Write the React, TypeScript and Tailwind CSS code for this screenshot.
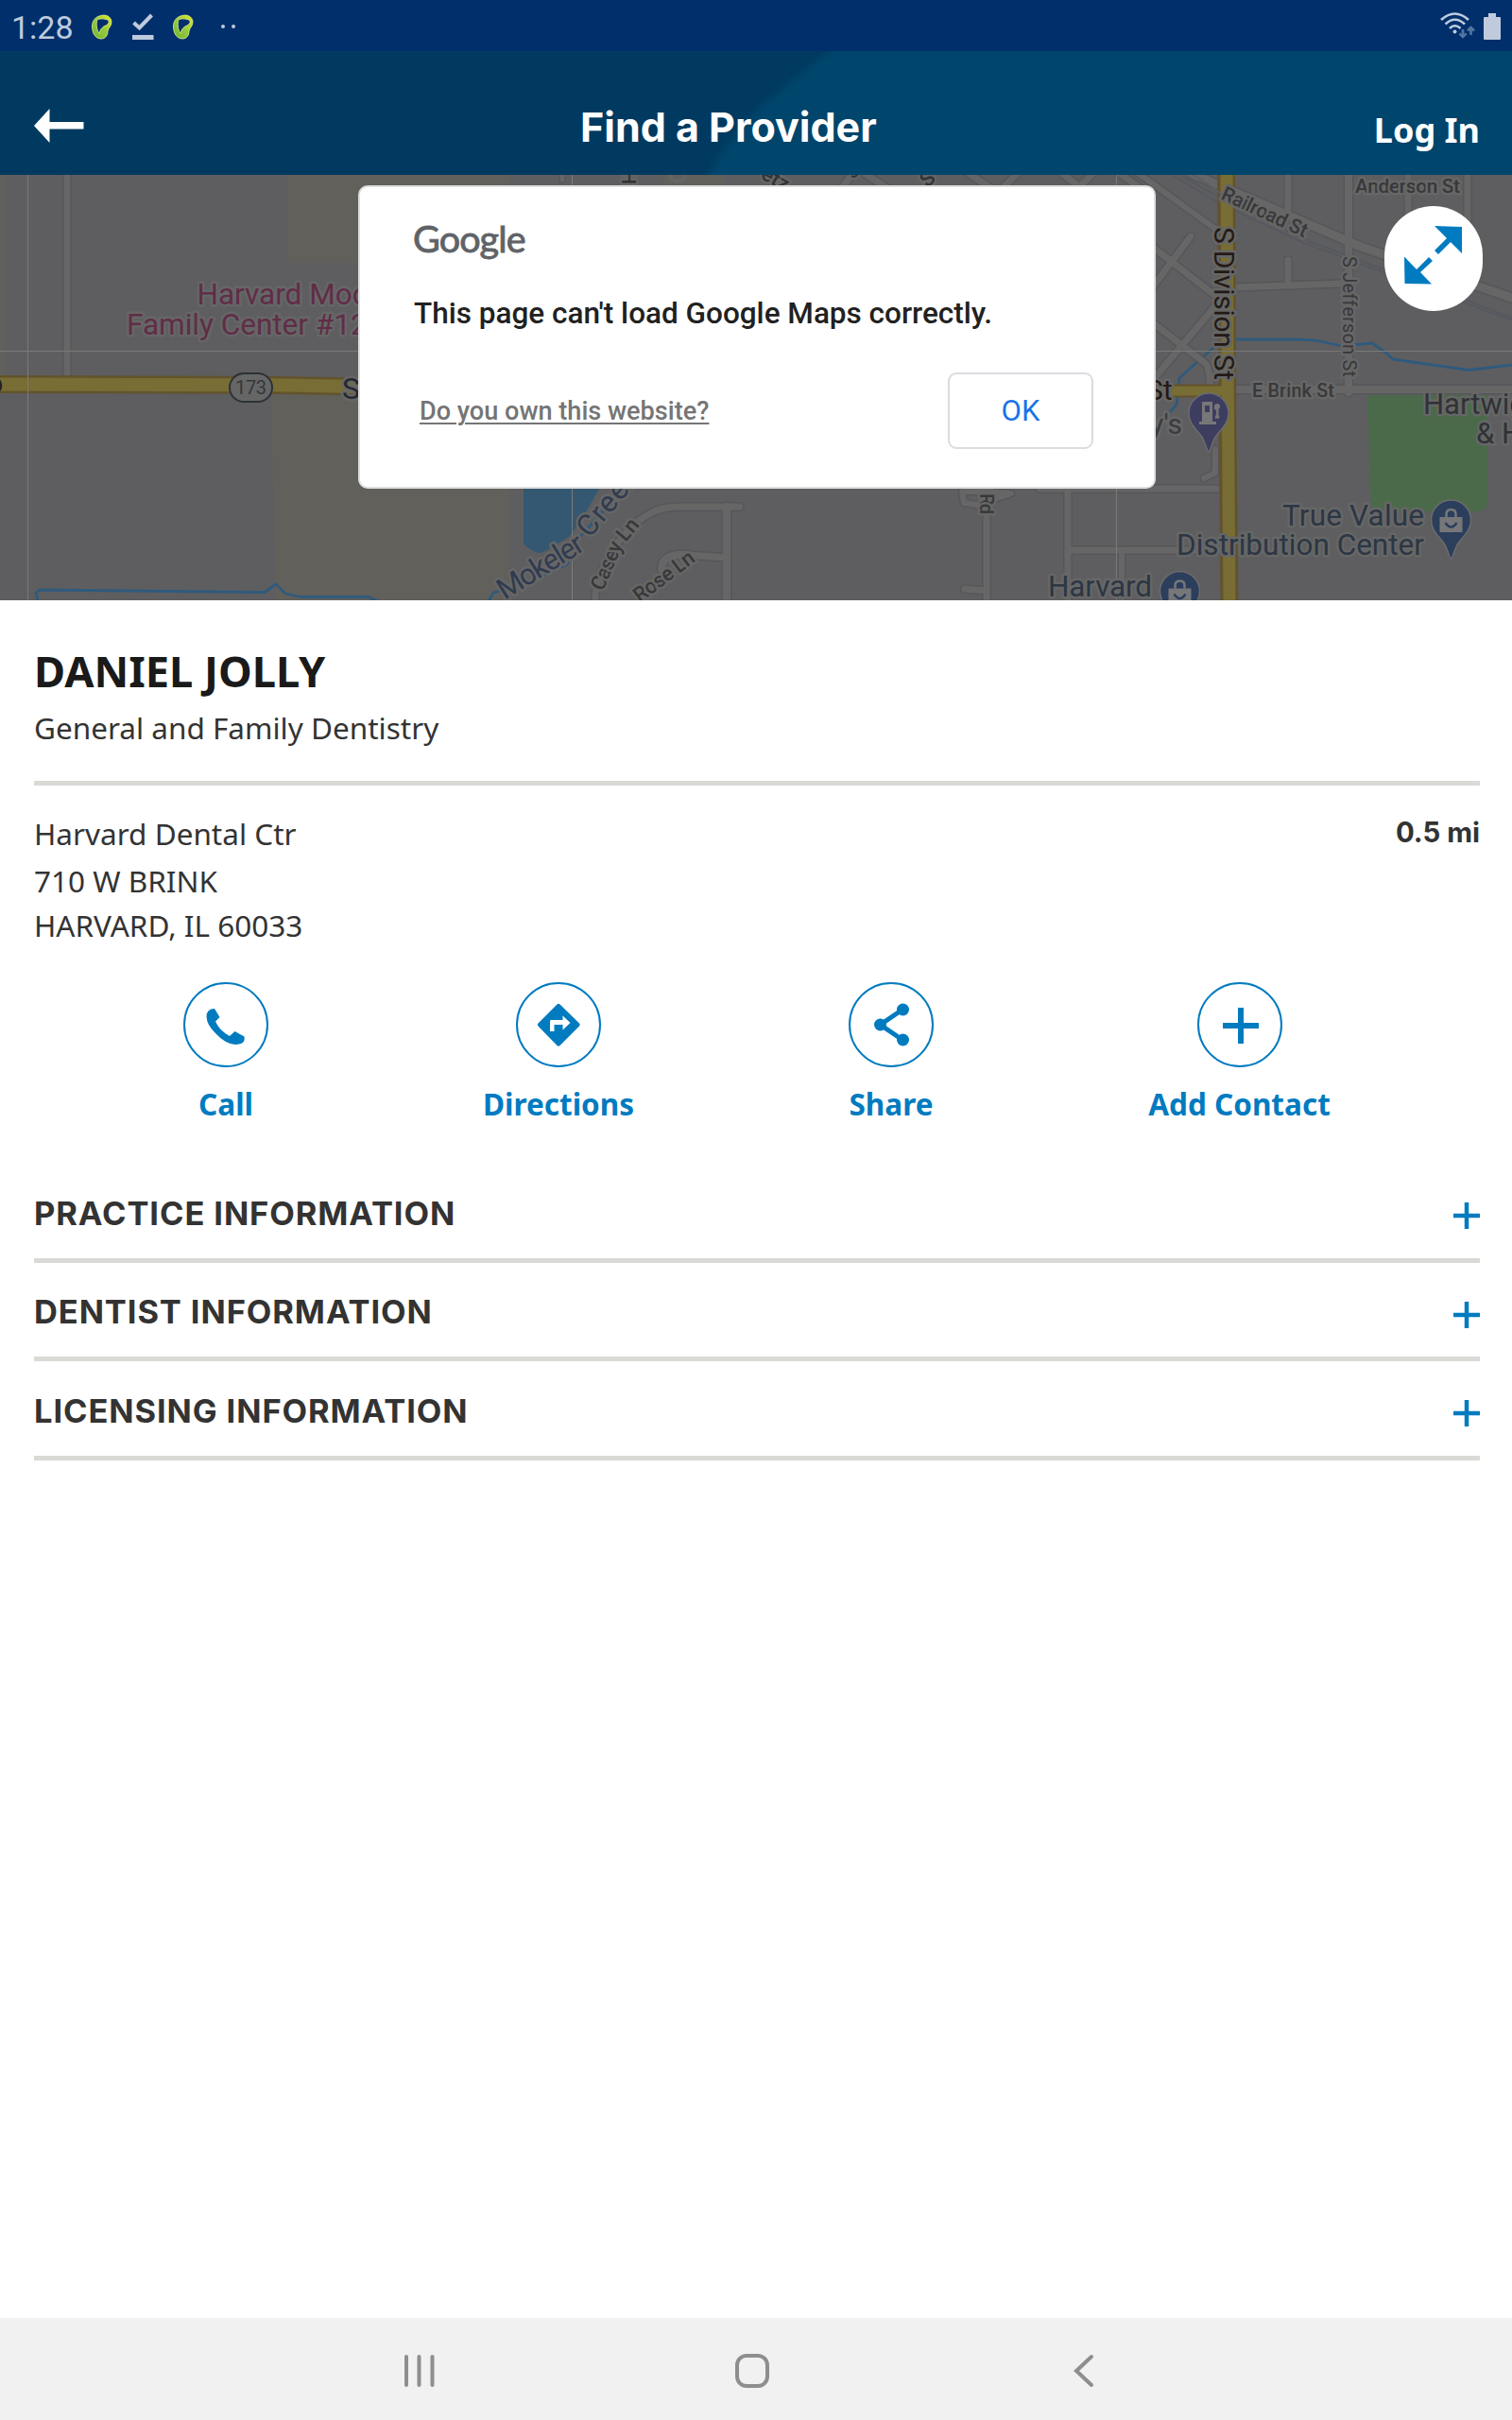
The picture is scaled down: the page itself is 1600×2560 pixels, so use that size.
import React from "react";

const MAP_FONT = "Roboto, sans-serif";

function AppGlyph() {
  return (
    <svg width="24" height="28" viewBox="0 0 24 28" className="shrink-0">
      <defs>
        <linearGradient id="lime" x1="0" y1="1" x2="1" y2="0">
          <stop offset="0" stopColor="#6ab52e" />
          <stop offset="0.5" stopColor="#94c93d" />
          <stop offset="1" stopColor="#e0ea1c" />
        </linearGradient>
      </defs>
      <path
        fill="url(#lime)"
        stroke="#e4f08a"
        strokeWidth="0.8"
        fillRule="evenodd"
        d="M11 1.500C16 0 21.500 2.500 22 8C22 13 18.500 14.500 18 18C18 22 16 26 11 26C5 26 1.500 20 1.500 13C1.500 7 5 2.500 11 1.500ZM7 5.500C5.500 10 6 16 9 20.500C10 16 12 13.500 16 12C18.500 11 19.500 9 19 6.500C15 4.500 11 4.500 7 5.500Z"
      />
    </svg>
  );
}

function StatusBar() {
  return (
    <div className="flex h-[54px] items-center bg-[#002f6c] pl-[12px] pr-3">
      <span className="w-[66px] pt-[3px] font-[Roboto] text-[34px] leading-none text-[#bfcbdd]">1:28</span>
      <div className="ml-[18px] pt-[3px]"><AppGlyph /></div>
      <svg width="23" height="28" viewBox="0 0 23 28" className="ml-[20px] mt-[2px]">
        <path d="M1.500 10L7.500 15.500L20.500 2" fill="none" stroke="#bfcbdd" strokeWidth="4" />
        <rect x="0" y="23" width="22.500" height="5" fill="#bfcbdd" />
      </svg>
      <div className="ml-[19px] pt-[3px]"><AppGlyph /></div>
      <div className="ml-[28px] mt-[2px] flex gap-[7px]">
        <span className="size-1 rounded-full bg-[#bfcbdd]" />
        <span className="size-1 rounded-full bg-[#bfcbdd]" />
      </div>
      <svg width="37" height="29" viewBox="0 0 37 29" className="ml-auto mt-px" fill="none" stroke="#bfcbdd" strokeWidth="2.600">
        <path d="M1 8Q15.500 -5 30 8" />
        <path d="M5.500 12.500Q15.500 3 26 12.500" />
        <path d="M10 17Q15.500 11.500 21.500 17" />
        <circle cx="15.500" cy="20.500" r="2" fill="#bfcbdd" stroke="none" />
        <g stroke="#55759f">
          <path d="M24 18V25" /><path d="M20.500 22.500L24 26L27.500 22.500" />
          <path d="M32.500 24V17" /><path d="M29 19.500L32.500 16L36 19.500" />
        </g>
      </svg>
      <svg width="18" height="28" viewBox="0 0 18 28" className="ml-[9px] mt-[2px]">
        <path d="M5 0H13V4H17A1 1 0 0 1 18 5V27A1 1 0 0 1 17 28H1A1 1 0 0 1 0 27V5A1 1 0 0 1 1 4H5Z" fill="#bfcbdd" />
      </svg>
    </div>
  );
}

function Header() {
  return (
    <header className="relative flex h-[131px] items-center justify-between bg-[#003a60] pl-[35px] pr-[34px]">
      <svg className="absolute inset-0" width="1600" height="131" viewBox="0 0 1600 131">
        <defs>
          <filter id="soft" x="-5%" y="-20%" width="110%" height="140%"><feGaussianBlur stdDeviation="3" /></filter>
        </defs>
        <path d="M898 -20L876 0L806 57Q770 92 750 131L738 155H1640V-20Z" fill="#00446c" filter="url(#soft)" />
      </svg>
      <svg className="relative mt-[26px]" width="54" height="36" viewBox="0 0 54 36" fill="#fff">
        <path d="M1 18L17.500 0V14H53.500V21.500H17.500V36Z" />
      </svg>
      <h1 className="absolute left-[614px] top-[52px] whitespace-nowrap font-[Inter] text-[43px] font-bold leading-[56px] text-white">
        Find a Provider
      </h1>
      <a className="relative mt-[36px] font-['Noto_Sans'] text-[36px] font-bold leading-[48px] text-white">Log In</a>
    </header>
  );
}

const ROADS: [string, number][] = [
  ["M71 180V400", 7],
  ["M595 170V190", 5],
  ["M630 640V628C635 600 655 560 690 542Q702 536 720 536H783", 7],
  ["M769 536V640", 8],
  ["M769 590L728 587", 7],
  ["M728 587Q700 585 700 602", 8],
  ["M1044 545V640", 7],
  ["M1044 625L1021 623", 7],
  ["M1035 534L1020 532L1018 520H1048L1070 522Z", 6],
  ["M1130 517V640", 7],
  ["M1100 517H1290", 7],
  ["M1130 582H1290", 7],
  ["M1187 582V640", 6],
  ["M890 200L905 180", 7],
  ["M910 180L940 200", 7],
  ["M1020 180L1050 200", 7],
  ["M1060 200L1080 180", 7],
  ["M1120 180L1145 200", 7],
  ["M1145 195L1160 180", 7],
  ["M1180 180L1205 198", 7],
  ["M1200 180L1290 245", 6],
  ["M1218 260L1285 312", 7],
  ["M1260 250L1218 306", 7],
  ["M1218 340L1275 384Q1280 388 1281 412", 7],
  ["M1285 325L1218 404", 7],
  ["M1363 180V225", 7],
  ["M1363 275V300", 7],
  ["M1304 304L1420 300", 7],
  ["M1427 180V415", 8],
  ["M1490 180V240", 7],
  ["M1553 180V240", 7],
  ["M1300 412H1600", 8],
  ["M1286 475V500L1274 506", 6],
  ["M1260 183L1440 261L1600 315", 9],
];

function Label(props: {
  x: number; y: number; size: number; fill: string; children: React.ReactNode;
  rotate?: number; weight?: number; length?: number; anchor?: "start" | "end";
}) {
  const { x, y, size, fill, children, rotate = 0, weight = 400, length, anchor = "start" } = props;
  return (
    <text
      transform={`translate(${x} ${y}) rotate(${rotate})`}
      fontFamily={MAP_FONT} fontSize={size} fontWeight={weight} fill={fill}
      stroke="#666666" strokeWidth="5" strokeLinejoin="round" paintOrder="stroke"
      textLength={length} textAnchor={anchor}
    >
      {children}
    </text>
  );
}

function Pin({ x, y, color, kind }: { x: number; y: number; color: string; kind: "fuel" | "shop" }) {
  return (
    <g transform={`translate(${x} ${y})`}>
      <path d="M0 41C-2 41 -3 31 -8 24C-14 16 -21 11 -21 0A21 21 0 1 1 21 0C21 11 14 16 8 24C3 31 2 41 0 41Z" fill={color} stroke="#6b6b6f" strokeWidth="1.500" />
      {kind === "fuel" ? (
        <g fill="#77777a">
          <path fillRule="evenodd" d="M-7 -12H4V9H8V12H-10V9H-7ZM-4 -8V-1H1V-8Z" />
          <path d="M6 -6Q11 -4 9 2Q12 6 7 4" fill="none" stroke="#77777a" strokeWidth="2.500" />
          <circle cx="9" cy="-7" r="3" />
        </g>
      ) : (
        <g>
          <path d="M-12 -3H12V13H-12Z" fill="#77777a" />
          <path d="M-5 -3V-6Q-5 -11 0 -11Q5 -11 5 -6V-3" fill="none" stroke="#77777a" strokeWidth="2.500" />
          <path d="M-6 3Q0 12 6 3" fill="none" stroke={color} strokeWidth="2.500" />
        </g>
      )}
    </g>
  );
}

function StreetMap() {
  return (
    <svg className="block" width="1600" height="450" viewBox="0 185 1600 450">
      <rect x="0" y="185" width="1600" height="450" fill="#5e5e60" />
      <g fill="#61605b">
        <path d="M0 185H5V397H0Z" />
        <path d="M305 185H540V278H305Z" />
        <path d="M287 415H538V640H292L288 480Z" />
      </g>
      <path d="M702 185H766V196H702Z" fill="#61605b" />
      <path d="M554 517V576Q566 585 571 585Q576 585 603 567Q616 550 634 517Z" fill="#345872" />
      <path d="M1447 418H1574V532Q1574 541 1560 541H1451Z" fill="#4b6a4a" />
      <g fill="none" stroke="#2f5a7d" strokeWidth="2.800" strokeLinejoin="round">
        <path d="M41 640L38 627L42 624L280 626.500L292 618L302 628L318 631.500H390L404 638" />
        <path d="M515 640L522 627L550 620L600 597L612 570L660 517" />
        <path d="M1238 436L1245 428L1248 400L1268 382L1284 368M1308 359H1370L1392 360L1420 366L1452 363L1465 372L1474 380L1554 391.500L1600 386" />
      </g>
      <g fill="none" strokeLinejoin="round" strokeLinecap="round">
        {ROADS.map(([d, w]) => <path key={d} d={d} stroke="#56565b" strokeWidth={w + 3} />)}
        {ROADS.map(([d, w]) => <path key={d} d={d} stroke="#666666" strokeWidth={w} />)}
      </g>
      <circle cx="717" cy="184" r="8" fill="none" stroke="#666" strokeWidth="4" />
      <g fill="none" stroke="#55585f" strokeWidth="1.800">
        <path d="M1240 185L1290 215L1380 257L1418 271L1600 339" />
        <path d="M1248 185L1300 214L1385 255L1600 336" />
      </g>
      <g fill="none">
        <path d="M0 406.500L300 407.500L379 409" stroke="#62532d" strokeWidth="19" />
        <path d="M0 406.500L300 407.500L379 409" stroke="#786d34" strokeWidth="14" />
        <path d="M1297.500 185L1299 450L1301 640" stroke="#62532d" strokeWidth="19" />
        <path d="M1220 413.500H1300" stroke="#62532d" strokeWidth="14" />
        <path d="M1220 413.500H1300" stroke="#786d34" strokeWidth="10" />
        <path d="M1298 185L1299.500 450L1301 640" stroke="#786d34" strokeWidth="13" />
      </g>
      <path d="M1260 183L1300 210L1360 242" stroke="#5c5e62" strokeWidth="2" fill="none" />
      <g stroke="#7a7a7a" strokeWidth="1">
        <path d="M29.500 185V635M605.500 185V635M1181.500 185V635M0 371.500H1600" />
      </g>
      <rect x="243" y="395" width="45" height="30" rx="15" fill="#666" stroke="#2c3236" strokeWidth="2" />
      <text x="249" y="417" fontFamily={MAP_FONT} fontSize="20" fill="#33383c" textLength="33">173</text>
      <circle cx="-8" cy="408" r="9" fill="#666" stroke="#202326" strokeWidth="2.500" />

      <Label x={208.500} y={321.500} size={31.500} fill="#602d48">Harvard Modern</Label>
      <Label x={134} y={353.500} size={31.500} fill="#602d48">Family Center #12</Label>
      <Label x={362} y={422} size={32} fill="#24292e">S</Label>
      <Label x={673} y={195} size={20} fill="#333" weight={500} rotate={-90}>H</Label>
      <Label x={804} y={188} size={22} fill="#333" weight={500} rotate={30}>etz</Label>
      <Label x={981} y={199} size={22} fill="#333" weight={500} rotate={-40}>S</Label>
      <Label x={902} y={190} size={22} fill="#333" rotate={-40}>s</Label>
      <Label x={534} y={635} size={31} fill="#303b50" rotate={-32} length={102}>Mokeler</Label>
      <Label x={624} y={570} size={31} fill="#303b50" rotate={-50} length={84}>Creek</Label>
      <Label x={638} y={626} size={22} fill="#38383a" rotate={-67} weight={500} length={54}>Casey</Label>
      <Label x={662} y={574} size={22} fill="#38383a" rotate={-50} weight={500} length={24}>Ln</Label>
      <Label x={677} y={638} size={22} fill="#38383a" rotate={-37} weight={500} length={75}>Rose Ln</Label>
      <Label x={1037} y={522} size={20} fill="#38383a" rotate={90} weight={500} length={22}>Rd</Label>
      <Label x={1213} y={423} size={30} fill="#241a14">St</Label>
      <Label x={1251} y={459} size={30} fill="#393b3e" anchor="end">Casey's</Label>
      <Label x={1285} y={240} size={30} fill="#241a14" rotate={90} length={162}>S Division St</Label>
      <Label x={1291} y={210} size={21} fill="#38383a" rotate={25} weight={500} length={98}>Railroad St</Label>
      <Label x={1434} y={204} size={21} fill="#38383a" weight={500} length={111}>Anderson St</Label>
      <Label x={1421} y={271} size={20} fill="#38383a" rotate={90} length={128}>S Jefferson St</Label>
      <Label x={1325} y={420} size={20} fill="#38383a" weight={500} length={87}>E Brink St</Label>
      <Label x={1506} y={438} size={31} fill="#2f3236">Hartwig</Label>
      <Label x={1562} y={469} size={31} fill="#2f3236">&amp; Ho</Label>
      <Label x={1507} y={556} size={31.500} fill="#2c3644" anchor="end" length={150}>True Value</Label>
      <Label x={1507} y={587} size={31.500} fill="#2c3644" anchor="end" length={262}>Distribution Center</Label>
      <Label x={1109} y={631} size={31.500} fill="#2c3644" length={110}>Harvard</Label>
      <Pin x={1279} y={437} color="#3d3d60" kind="fuel" />
      <Pin x={1535.500} y={550} color="#2b3f5c" kind="shop" />
      <Pin x={1248.500} y={625.500} color="#2b3f5c" kind="shop" />
    </svg>
  );
}

function MapDialog() {
  return (
    <div className="absolute left-[379px] top-[11px] h-[321px] w-[844px] rounded-[10px] border-2 border-[#dedede] bg-white font-[Roboto]">
      <div className="ml-[56px] mt-[32px] h-[44px] font-[Lato] text-[39.500px] leading-[44px] tracking-[-0.900px] text-[#5f6368] [-webkit-text-stroke:0.900px_#5f6368]">
        Google
      </div>
      <p className="ml-[57px] mt-[38px] whitespace-nowrap text-[31.500px] font-medium leading-[40px] text-[#212121]">
        This page can't load Google Maps correctly.
      </p>
      <div className="mt-[42px] flex items-center justify-between pl-[63px] pr-[64px]">
        <a className="mt-[3px] text-[27.100px] font-medium leading-none text-[#757575] underline decoration-2 underline-offset-[3px]">Do you own this website?</a>
        <button className="h-[81px] w-[154px] rounded-[9px] border-2 border-[#dadce0] pt-[2px] text-[31px] text-[#1a73e8]">OK</button>
      </div>
    </div>
  );
}

function ExpandButton() {
  return (
    <button className="absolute left-[1465px] top-[33px] h-[111px] w-[104px] rounded-[52px] bg-white">
      <svg width="104" height="111" viewBox="0 0 104 111" fill="#007bc0">
        <path d="M53 21L82 22V50L70 38L57 51L53 47L66 34Z" />
        <path d="M21 53.500L34 67L47 54L51 58L38 70L50 82.500L21.500 82Z" />
      </svg>
    </button>
  );
}

const ICONS = {
  call: <path d="M24.500 36Q25 28 33 28L38.500 37L34 41.500Q38 51 49 57L54.500 52L64.500 57.500Q66 66 55 66Q44 65 34.500 54.500Q24.500 45 24.500 36Z" />,
  directions: (
    <path fillRule="evenodd" d="M43.500 23.500Q45 22 46.500 23.500L67 43.500Q68.500 45 67 46.500L46.500 67Q45 68.500 43.500 67L23.500 46.500Q22 45 23.500 43.500ZM36 41V52H40.500V45H49.500V50.500L57.500 43L49.500 35.500V40H37.500Q36 40 36 41Z" />
  ),
  share: (
    <g>
      <path d="M57 29L33.500 45L57 61" fill="none" stroke="#007bc0" strokeWidth="5" />
      <circle cx="57.500" cy="29" r="6.500" /><circle cx="33.500" cy="45" r="6.500" /><circle cx="57.500" cy="61" r="6.500" />
    </g>
  ),
  add: <path d="M43 27H49V43H65V49H49V65H43V49H27V43H43Z" />,
};

function Action({ label, icon, width }: { label: string; icon: keyof typeof ICONS; width: string }) {
  return (
    <div className={`flex flex-col items-center ${width}`}>
      <div className="size-[90px] shrink-0 rounded-full border-2 border-[#007bc0]">
        <svg className="-m-[2px]" width="90" height="90" viewBox="0 0 90 90" fill="#007bc0">{ICONS[icon]}</svg>
      </div>
      <span className="mt-[17px] whitespace-nowrap text-[31.500px] font-bold leading-[44px] text-[#007bc0]">{label}</span>
    </div>
  );
}

function Section({ title }: { title: string }) {
  return (
    <div className="flex h-[104.500px] items-center justify-between border-b-[5px] border-[#d9dad5]">
      <h3 className="mt-[6px] font-[Inter] text-[34.500px] font-bold leading-[48px] tracking-[0.900px] text-[#333]">{title}</h3>
      <svg width="28" height="28" viewBox="0 0 28 28" className="mt-[11px]">
        <path d="M14 0V28M0 14H28" stroke="#007bc0" strokeWidth="4.500" />
      </svg>
    </div>
  );
}

function NavBar() {
  return (
    <nav className="flex h-[108px] items-center bg-[#f1f1f1] pt-[3px]">
      <svg width="34" height="36" viewBox="0 0 34 36" className="ml-[427px]" stroke="#8e8e8e" strokeWidth="4" strokeLinecap="round">
        <path d="M3 3V33M16.500 3V33M30.500 3V33" />
      </svg>
      <svg width="38" height="38" viewBox="0 0 38 38" className="ml-[316px]" fill="none" stroke="#8e8e8e" strokeWidth="4">
        <rect x="3" y="3" width="32" height="32" rx="10" />
      </svg>
      <svg width="24" height="36" viewBox="0 0 24 36" className="ml-[320px]" fill="none" stroke="#8e8e8e" strokeWidth="4" strokeLinecap="round">
        <path d="M20 3L4 18L20 33" />
      </svg>
    </nav>
  );
}

export default function App() {
  return (
    <div className="flex h-[2560px] w-[1600px] flex-col overflow-hidden bg-white font-['Noto_Sans',sans-serif]">
      <StatusBar />
      <Header />
      <div className="relative h-[450px] shrink-0 overflow-hidden">
        <StreetMap />
        <MapDialog />
        <ExpandButton />
      </div>
      <main className="flex flex-1 flex-col pl-[36px] pr-[34px] pt-[43px] text-[#333]">
        <h2 className="text-[45.200px] font-bold leading-[64px] text-[#1a1a1a]">DANIEL JOLLY</h2>
        <p className="mt-[6px] text-[31.500px] leading-[44px]">General and Family Dentistry</p>
        <div className="mt-[34px] h-[5px] bg-[#d9dad5]" />
        <div className="mt-[29px] flex items-start justify-between text-[31.500px]">
          <address className="not-italic">
            <p className="leading-[44px]">Harvard Dental Ctr</p>
            <p className="mt-[4px] leading-[48px]">710 W BRINK</p>
            <p className="leading-[46px]">HARVARD, IL 60033</p>
          </address>
          <span className="mt-px font-[Inter] text-[29.400px] font-bold leading-[40px]">0.5 mi</span>
        </div>
        <div className="mt-[37px] flex gap-[227px] pl-[158px]">
          <Action label="Call" icon="call" width="w-[90px]" />
          <Action label="Directions" icon="directions" width="w-[160px]" />
          <Action label="Share" icon="share" width="w-[90px]" />
          <Action label="Add Contact" icon="add" width="w-[193px]" />
        </div>
        <div className="mt-[41px]">
          <Section title="PRACTICE INFORMATION" />
          <Section title="DENTIST INFORMATION" />
          <Section title="LICENSING INFORMATION" />
        </div>
      </main>
      <NavBar />
    </div>
  );
}
